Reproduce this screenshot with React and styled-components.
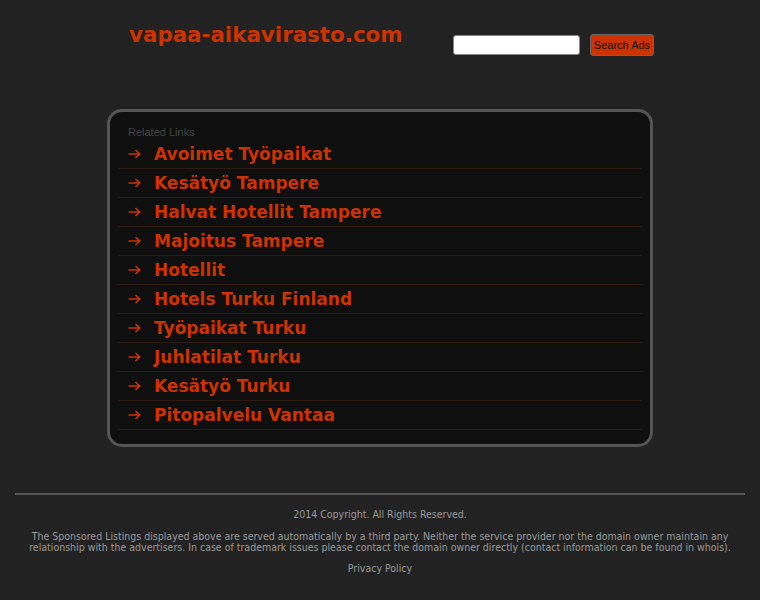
import React from "react";
import styled, { createGlobalStyle } from "styled-components";

const Global = createGlobalStyle`
  html, body { margin: 0; padding: 0; background: #222222; }
  body { font-family: "DejaVu Sans", sans-serif; }
`;

const Page = styled.div`
  width: 760px;
  min-height: 600px;
  background: #222222;
`;

const Main = styled.div`
  width: 546px;
  margin: 0 auto;
  padding-top: 22px;
`;

const Header = styled.div`
  display: flex;
  justify-content: space-between;
  align-items: flex-start;
  padding-left: 22px;
  height: 87px;
`;

const Title = styled.div`
  font-family: "DejaVu Sans", sans-serif;
  font-weight: bold;
  font-size: 21.4px;
  line-height: 26px;
  color: #cc3300;
`;

const SearchForm = styled.form`
  display: flex;
  align-items: center;
  gap: 10px;
  margin-top: 12px;
  margin-right: -1px;
`;

const SearchInput = styled.input`
  box-sizing: border-box;
  width: 127px;
  height: 20px;
  border: 1px solid #888;
  border-radius: 3px;
  background: #fff;
  padding: 0 3px;
`;

const SearchButton = styled.button`
  box-sizing: border-box;
  width: 64px;
  height: 22px;
  background: #cc3300;
  border: 1px solid #666;
  border-radius: 3px;
  color: #111;
  font-family: "Liberation Sans", Arial, sans-serif;
  font-size: 11px;
  padding: 0;
`;

const Box = styled.div`
  box-sizing: border-box;
  border: 3px solid #555555;
  border-radius: 15px;
  background: #0f0f0f;
  padding: 13px 8px 14px;
`;

const Label = styled.div`
  font-family: "Liberation Sans", Arial, sans-serif;
  font-size: 11px;
  line-height: 15px;
  color: #444444;
  padding-left: 10px;
`;

const LinkList = styled.ul`
  list-style: none;
  margin: 0;
  padding: 0;
`;

const LinkRow = styled.li`
  display: flex;
  align-items: center;
  height: 28px;
  border-bottom: 1px solid #2e1a10;
  padding-left: 10px;
`;

const Arrow = styled.svg`
  width: 13px;
  height: 10px;
  margin-right: 13px;
  flex: none;
`;

const LinkText = styled.a`
  font-family: "DejaVu Sans", sans-serif;
  font-weight: bold;
  font-size: 17px;
  color: #cc3300;
  text-decoration: none;
`;

const Footer = styled.div`
  margin-top: 46px;
  padding: 0 15px;
  text-align: center;
  font-family: "DejaVu Sans Condensed", "DejaVu Sans", sans-serif;
  font-size: 10.5px;
  color: #999999;
`;

const Rule = styled.div`
  height: 2px;
  background: #555555;
`;

const FooterLine = styled.p`
  margin: ${(p) => p.$top || 0}px 0 0;
  line-height: 11px;
`;

const links = [
  "Avoimet Työpaikat",
  "Kesätyö Tampere",
  "Halvat Hotellit Tampere",
  "Majoitus Tampere",
  "Hotellit",
  "Hotels Turku Finland",
  "Työpaikat Turku",
  "Juhlatilat Turku",
  "Kesätyö Turku",
  "Pitopalvelu Vantaa",
];

export default function App() {
  return (
    <Page>
      <Global />
      <Main>
        <Header>
          <Title>vapaa-aikavirasto.com</Title>
          <SearchForm onSubmit={(e) => e.preventDefault()}>
            <SearchInput type="text" />
            <SearchButton type="submit">Search Ads</SearchButton>
          </SearchForm>
        </Header>
        <Box>
          <Label>Related Links</Label>
          <LinkList>
            {links.map((l) => (
              <LinkRow key={l}>
                <Arrow viewBox="0 0 13 10">
                  <path d="M0.5 5H11.5M7.5 1L11.8 5L7.5 9" fill="none" stroke="#cc3300" strokeWidth="1.6" />
                </Arrow>
                <LinkText href="#">{l}</LinkText>
              </LinkRow>
            ))}
          </LinkList>
        </Box>
      </Main>
      <Footer>
        <Rule />
        <FooterLine $top={14}>2014 Copyright. All Rights Reserved.</FooterLine>
        <FooterLine $top={11}>
          The Sponsored Listings displayed above are served automatically by a third party. Neither the service provider nor the domain owner maintain any relationship with the advertisers. In case of trademark issues please contact the domain owner directly (contact information can be found in whois).
        </FooterLine>
        <FooterLine $top={10}>Privacy Policy</FooterLine>
      </Footer>
    </Page>
  );
}
